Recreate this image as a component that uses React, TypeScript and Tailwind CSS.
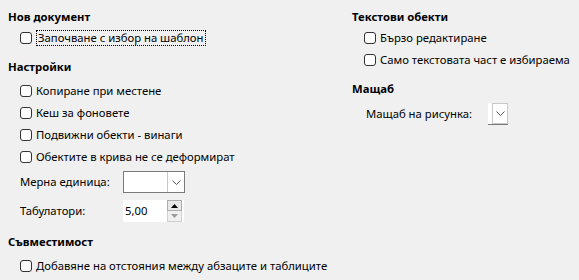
import React from "react";

const Check = ({ label, focus }: { label: string; focus?: boolean }) => (
  <label className="flex items-center h-[22px] pl-[12px] gap-[4px] whitespace-nowrap">
    <span className="w-[12px] h-[12px] rounded-[3px] border border-[#333] bg-white shrink-0" />
    <span
      className={
        focus
          ? "border border-dotted border-black px-[1px] leading-[14px]"
          : "leading-[14px]"
      }
    >
      {label}
    </span>
  </label>
);

const Heading = ({ children }: { children: React.ReactNode }) => (
  <h3 className="h-[18px] flex items-center font-bold whitespace-nowrap">{children}</h3>
);

const Chevron = () => (
  <svg width="9" height="5" viewBox="0 0 9 5" fill="none">
    <path d="M0.5 0.5 L4.5 4.5 L8.5 0.5" stroke="#555" strokeWidth="1" />
  </svg>
);

export default function App() {
  return (
    <div
      className="w-[579px] h-[280px] bg-[#f0f0f0] text-[11.3px] text-black flex"
      style={{ fontFamily: '"Noto Sans", "Open Sans", sans-serif' }}
    >
      <div className="w-[352px] shrink-0 pl-[8px] pt-[8px] flex flex-col">
        <Heading>Нов документ</Heading>
        <div className="mt-[1px]">
          <Check label="Започване с избор на шаблон" focus />
        </div>
        <div className="mt-[9px]">
          <Heading>Настройки</Heading>
        </div>
        <div className="mt-[4px] flex flex-col">
          <Check label="Копиране при местене" />
          <Check label="Кеш за фоновете" />
          <Check label="Подвижни обекти - винаги" />
          <Check label="Обектите в крива не се деформират" />
        </div>
        <div className="mt-[3px] h-[22px] flex items-center pl-[12px]">
          <span className="w-[103px]">Мерна единица:</span>
          <div className="w-[62px] h-[22px] border border-[#7a7a7a] bg-white flex">
            <div className="flex-1" />
            <div className="w-[17px] border-l border-[#c8c8c8] flex items-center justify-center">
              <Chevron />
            </div>
          </div>
        </div>
        <div className="mt-[7px] h-[22px] flex items-center pl-[12px]">
          <span className="w-[103px]">Табулатори:</span>
          <div className="w-[61px] h-[22px] bg-white flex items-center">
            <span className="flex-1 pl-[2px]">5,00</span>
            <div className="w-[15px] h-[22px] flex flex-col mr-[2px]">
              <div className="h-[11px] border border-[#adadad] bg-[#e8e8e8] flex items-center justify-center">
                <svg width="7" height="4" viewBox="0 0 7 4">
                  <path d="M0 4 L3.5 0 L7 4 Z" fill="#000" />
                </svg>
              </div>
              <div className="h-[11px] border border-t-0 border-[#d0d0d0] bg-[#f0f0f0] flex items-center justify-center">
                <svg width="7" height="4" viewBox="0 0 7 4">
                  <path d="M0 0 L3.5 4 L7 0 Z" fill="#9a9a9a" />
                </svg>
              </div>
            </div>
          </div>
        </div>
        <div className="mt-[11px]">
          <Heading>Съвместимост</Heading>
        </div>
        <div className="mt-[4px]">
          <Check label="Добавяне на отстояния между абзаците и таблиците" />
        </div>
      </div>
      <div className="flex-1 pt-[8px] flex flex-col">
        <Heading>Текстови обекти</Heading>
        <div className="mt-[1px] flex flex-col">
          <Check label="Бързо редактиране" />
          <Check label="Само текстовата част е избираема" />
        </div>
        <div className="mt-[9px]">
          <Heading>Мащаб</Heading>
        </div>
        <div className="mt-[5px] h-[22px] flex items-center pl-[14px]">
          <span className="w-[122px] whitespace-nowrap">Мащаб на рисунка:</span>
          <div className="w-[20px] h-[22px] bg-white border-b border-[#7a7a7a] flex">
            <div className="w-[4px]" />
            <div className="w-[16px] border border-[#c8c8c8] flex items-center justify-center">
              <Chevron />
            </div>
          </div>
        </div>
      </div>
    </div>
  );
}
